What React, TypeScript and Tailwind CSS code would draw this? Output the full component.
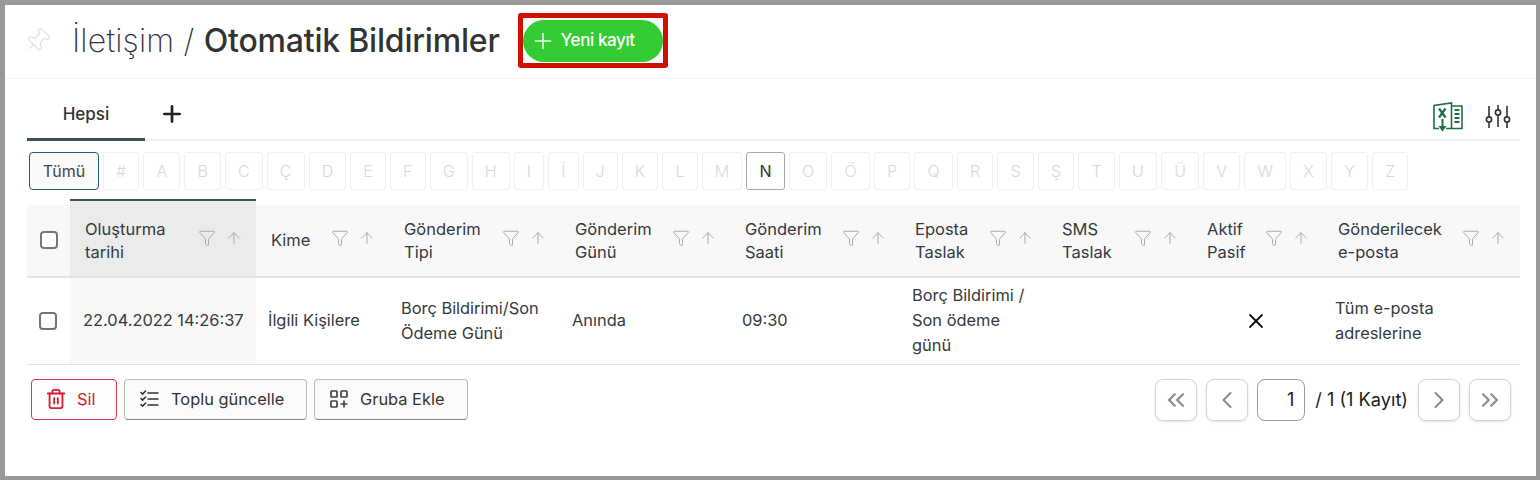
import React from "react";
import { Plus, Trash2, ChevronsLeft, ChevronsRight, ChevronLeft, ChevronRight, Funnel, ArrowUp, X, Pin } from "lucide-react";

const lettersBefore = ["#","A","B","C","Ç","D","E","F","G","H","I","İ","J","K","L","M"];
const lettersAfter = ["O","Ö","P","Q","R","S","Ş","T","U","Ü","V","W","X","Y","Z"];

const ExcelIcon = () => (
  <svg width="30" height="30" viewBox="0 0 30 30" fill="none" stroke="#1d7044" strokeWidth="1.6">
    <path d="M6 26.5 H1 V3.5 L18.5 1 V26.5 H13" />
    <path d="M18.5 4 H29 V26.5 H18.5" />
    <path d="M21.5 8h5M21.5 12h5M21.5 16h5M21.5 20h5" strokeWidth="1.8" />
    <path d="M6 6.5 L12.5 15.5 M12.5 6.5 L6 15.5" strokeWidth="2.2" />
    <path d="M9.5 17 V25" strokeWidth="2" />
    <path d="M5.5 24 H13.5 L9.5 29.5 Z" fill="#1d7044" stroke="none" />
  </svg>
);

const SlidersIcon = () => (
  <svg width="26" height="26" viewBox="0 0 26 26" fill="none" stroke="#333" strokeWidth="1.6">
    <path d="M4 2v11M4 18v6M13 1v5M13 11v12M22 2v11M22 18v6" />
    <circle cx="4" cy="15.5" r="2.6" />
    <circle cx="13" cy="8.5" r="2.6" />
    <circle cx="22" cy="15.5" r="2.6" />
  </svg>
);

const GroupAddIcon = () => (
  <svg width="18" height="18" viewBox="0 0 18 18" fill="none" stroke="#444" strokeWidth="1.7">
    <rect x="1" y="1" width="6" height="6" rx="0.8" />
    <rect x="11" y="1" width="6" height="6" rx="0.8" />
    <rect x="1" y="11" width="6" height="6" rx="0.8" />
    <path d="M14 10.5v7M10.5 14h7" />
  </svg>
);

const ChecklistIcon = () => (
  <svg width="19" height="18" viewBox="0 0 19 18" fill="none" stroke="#333" strokeLinecap="round">
    <path d="M8 3h10M8 9h10M8 15h10" strokeWidth="1.5" />
    <path d="M1 2.5l1.6 1.6L5.6 1M1 8.5l1.6 1.6L5.6 7M1 14.5l1.6 1.6L5.6 13" strokeWidth="1.6" />
  </svg>
);

const Box = () => <span className="block w-[18px] h-[18px] rounded-[4px] border-2 border-[#757575] bg-white" />;

const HeadIcons = () => (
  <span className="flex items-center gap-[9px] text-[#a8a8a8] shrink-0 -mt-[5px]">
    <Funnel size={18} strokeWidth={1.3} />
    <ArrowUp size={18} strokeWidth={1.3} />
  </span>
);

function Head({ a, b }: { a: string; b?: string }) {
  return (
    <div className="flex items-center justify-between pl-[15px] pr-[13px] leading-[23px] text-[16.5px]">
      <span>{a}{b && <br />}{b}</span>
      <HeadIcons />
    </div>
  );
}

const headerCols: [string, string | undefined][] = [
  ["Kime", undefined],
  ["Gönderim", "Tipi"],
  ["Gönderim", "Günü"],
  ["Gönderim", "Saati"],
  ["Eposta", "Taslak"],
  ["SMS", "Taslak"],
  ["Aktif", "Pasif"],
  ["Gönderilecek", "e-posta"],
];

const th = "p-0 font-normal text-left border-b-2 border-[#e2e2e2] align-middle";
const td = "py-0 pl-[12px] border-b border-[#e2e2e2] leading-[25px] align-middle";
const nav = "w-[42px] h-[42px] rounded-[8px] border border-[#d4d4d4] shadow-sm flex items-center justify-center text-[#8a8a8a]";

export default function App() {
  return (
    <div className="w-[1540px] h-[480px] overflow-hidden bg-white border-[#999999] border-t-[5px] border-l-[5px] border-r-[4px] border-b-[4px] text-[#333a40] font-['Inter','Liberation_Sans',sans-serif] text-[16.4px]">
      <header className="h-[74px] flex items-center border-b border-[#f2f2f2] pl-[19px] pb-[2px]">
        <Pin size={27} strokeWidth={1} className="text-[#dedede] rotate-45" />
        <h1 className="ml-[21px] text-[32px] leading-[36px] text-[#333] whitespace-nowrap">
          <span className="font-extralight tracking-[0.2px]">İletişim / </span>
          <span className="font-medium tracking-[-0.2px]">Otomatik Bildirimler</span>
        </h1>
        <div className="ml-[18px] w-[150px] h-[55px] border-[5px] border-[#cc1100] rounded-[3px] flex items-center justify-center bg-white">
          <button className="w-[141px] h-[42px] rounded-full bg-[#33cc33] text-white flex items-center pl-[7px] gap-[5px] text-[17px] font-medium">
            <Plus size={26} strokeWidth={1.3} />
            <span className="tracking-[-0.4px]">Yeni kayıt</span>
          </button>
        </div>
      </header>

      <div className="pl-[22px] pr-[16px]">
        <div className="h-[62px] flex items-end justify-between border-b-2 border-[#f0f0f0] relative">
          <div className="flex items-start">
            <div className="w-[118px] h-[47px] text-center font-medium text-[17px] leading-[40px] border-b-[3px] border-[#38525a] relative top-[2px] text-[#333]">Hepsi</div>
            <Plus size={26} strokeWidth={2.5} className="ml-[14px] mt-[9px] text-[#222]" />
          </div>
          <div className="flex items-center gap-[22px] pb-[7px] pr-[9px]">
            <ExcelIcon />
            <SlidersIcon />
          </div>
        </div>

        <div className="flex items-center gap-[4px] mt-[11px] h-[38px] pl-[2px]">
          <button className="w-[70px] h-[38px] rounded-[4px] border border-[#1e5f74] bg-[#fafafa] text-[#444] text-[16px]">Tümü</button>
          {lettersBefore.map((l) => (
            <span key={l} className="h-[38px] px-[12.1px] flex items-center justify-center rounded-[3px] border border-[#f0f0f0] text-[#d8d8d8] text-[16px] font-light">{l}</span>
          ))}
          <span className="h-[38px] px-[12.3px] flex items-center justify-center rounded-[3px] border border-[#a8a8a8] text-[#333] text-[16px]">N</span>
          {lettersAfter.map((l) => (
            <span key={l} className="h-[38px] px-[12.2px] flex items-center justify-center rounded-[3px] border border-[#f0f0f0] text-[#d8d8d8] text-[16px] font-light">{l}</span>
          ))}
        </div>

        <div className="mt-[15px] w-[1493px]">
          <table className="table-fixed border-collapse w-full">
            <colgroup>
              <col className="w-[43px]" />
              <col className="w-[186px]" />
              <col className="w-[133px]" />
              <col className="w-[171px]" />
              <col className="w-[170px]" />
              <col className="w-[170px]" />
              <col className="w-[147px]" />
              <col className="w-[145px]" />
              <col className="w-[131px]" />
              <col className="w-[197px]" />
            </colgroup>
            <thead>
              <tr className="h-[72px]">
                <th className={`${th} bg-[#f8f8f8]`}><div className="pl-[13px] -mt-[2px]"><Box /></div></th>
                <th className={`${th} bg-[#ebebeb] relative`}>
                  <span className="absolute left-0 right-0 -top-[6px] h-[6px] bg-[#ebebeb] border-t-[2px] border-[#3e5258]" />
                  <Head a="Oluşturma" b="tarihi" />
                </th>
                {headerCols.map(([a, b], i) => (
                  <th key={i} className={`${th} bg-[#f8f8f8]`}><Head a={a} b={b} /></th>
                ))}
              </tr>
            </thead>
            <tbody>
              <tr className="h-[87px]">
                <td className="border-b border-[#e2e2e2] pl-[12px] align-middle"><Box /></td>
                <td className="py-0 pl-[13px] pr-[4px] border-b border-[#e2e2e2] leading-[25px] align-middle bg-[#f8f8f8] whitespace-nowrap">22.04.2022 14:26:37</td>
                <td className={`${td} pr-[8px]`}>İlgili Kişilere</td>
                <td className={`${td} pr-[8px]`}>Borç Bildirimi/Son Ödeme Günü</td>
                <td className={`${td} pr-[8px]`}>Anında</td>
                <td className={`${td} pr-[8px]`}>09:30</td>
                <td className={`${td} pr-[14px]`}>Borç Bildirimi / Son ödeme günü</td>
                <td className={`${td} pr-[8px]`}></td>
                <td className={td}><div className="flex justify-center pr-[16px] text-[#111]"><X size={24} strokeWidth={1.8} /></div></td>
                <td className={`${td} pr-[40px]`}>Tüm e-posta adreslerine</td>
              </tr>
            </tbody>
          </table>
        </div>

        <div className="mt-[14px] flex justify-between w-[1493px] pl-[4px]">
          <div className="flex gap-[7px] h-[41px]">
            <button className="w-[86px] rounded-[4px] border border-[#dc3545] bg-[#fdfdfd] text-[#d0202f] flex items-center pl-[13px] gap-[10px]">
              <Trash2 size={22} strokeWidth={2} />Sil
            </button>
            <button className="w-[183px] rounded-[4px] border border-[#bbb] border-b-[#888] bg-[#fbfbfb] text-[#333] flex items-center pl-[15px] gap-[12px]">
              <ChecklistIcon />Toplu güncelle
            </button>
            <button className="w-[154px] rounded-[4px] border border-[#bbb] border-b-[#888] bg-[#fbfbfb] text-[#333] flex items-center pl-[15px] gap-[12px]">
              <GroupAddIcon />Gruba Ekle
            </button>
          </div>
          <div className="flex items-center gap-[9px] h-[42px] pr-[9px]">
            <span className={nav}><ChevronsLeft size={28} strokeWidth={1.8} /></span>
            <span className={nav}><ChevronLeft size={28} strokeWidth={1.8} /></span>
            <span className="w-[48px] h-[42px] rounded-[8px] border border-[#9a9a9a] flex items-center justify-end pr-[10px] text-[#222] text-[18px]">1</span>
            <span className="text-[#222] text-[18.2px] whitespace-nowrap mx-[1px]">/ 1 (1 Kayıt)</span>
            <span className={nav}><ChevronRight size={28} strokeWidth={1.8} /></span>
            <span className={nav}><ChevronsRight size={28} strokeWidth={1.8} /></span>
          </div>
        </div>
      </div>
    </div>
  );
}
